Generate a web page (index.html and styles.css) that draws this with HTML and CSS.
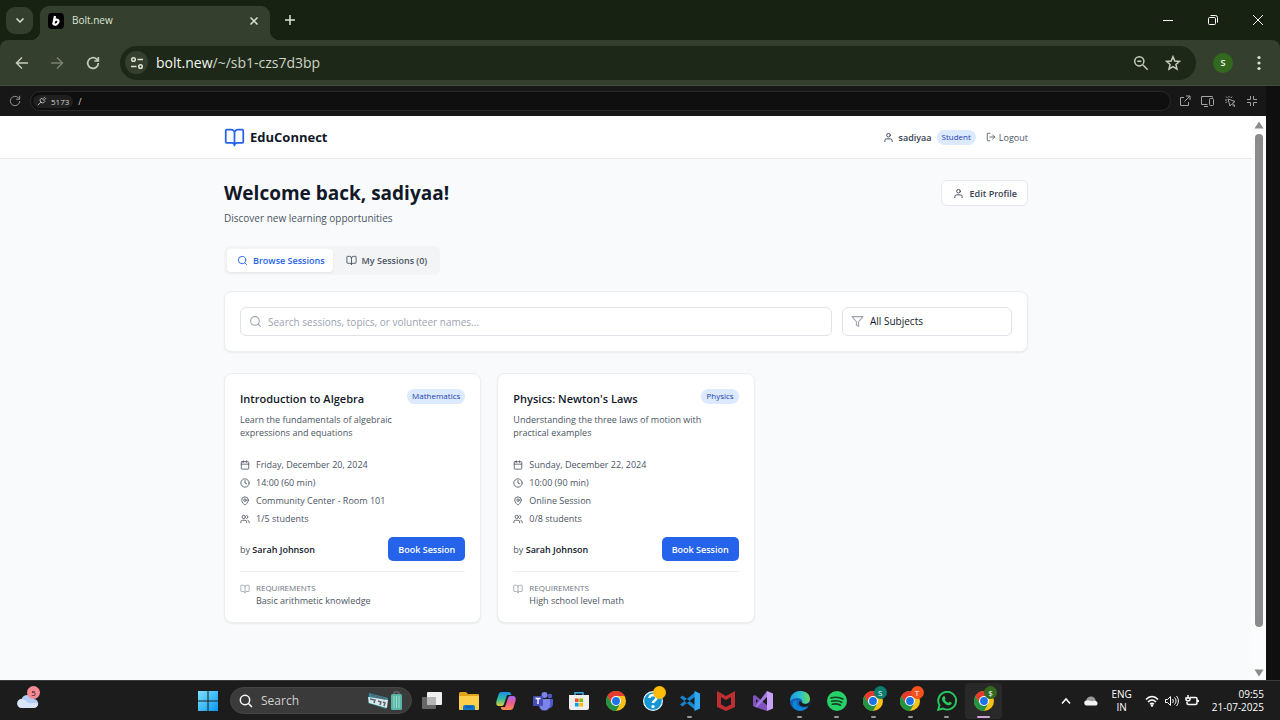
FILE: index.html
```html
<!DOCTYPE html>
<html lang="en">
<head>
<meta charset="utf-8">
<meta name="viewport" content="width=device-width, initial-scale=1">
<title>Bolt.new</title>
<link rel="stylesheet" href="styles.css">
</head>
<body>
<svg class="sprite" aria-hidden="true">
  <symbol id="book" viewBox="0 0 24 24"><path d="M12 7v14M3 18a1 1 0 0 1-1-1V4a1 1 0 0 1 1-1h5a4 4 0 0 1 4 4 4 4 0 0 1 4-4h5a1 1 0 0 1 1 1v13a1 1 0 0 1-1 1h-6a3 3 0 0 0-3 3 3 3 0 0 0-3-3z"/></symbol>
  <symbol id="user" viewBox="0 0 24 24"><path d="M20 21v-2a4 4 0 0 0-4-4H8a4 4 0 0 0-4 4v2"/><circle cx="12" cy="7" r="4"/></symbol>
  <symbol id="logout" viewBox="0 0 24 24"><path d="M9 21H5a2 2 0 0 1-2-2V5a2 2 0 0 1 2-2h4M16 17l5-5-5-5M21 12H9"/></symbol>
  <symbol id="search" viewBox="0 0 24 24"><circle cx="11" cy="11" r="8"/><path d="m21 21-4.3-4.3"/></symbol>
  <symbol id="filter" viewBox="0 0 24 24"><path d="M22 3H2l8 9.46V19l4 2v-8.54z"/></symbol>
  <symbol id="calendar" viewBox="0 0 24 24"><path d="M8 2v4M16 2v4M3 10h18"/><rect x="3" y="4" width="18" height="18" rx="2"/></symbol>
  <symbol id="clock" viewBox="0 0 24 24"><circle cx="12" cy="12" r="10"/><path d="M12 6v6l4 2"/></symbol>
  <symbol id="pin" viewBox="0 0 24 24"><path d="M20 10c0 6-8 12-8 12s-8-6-8-12a8 8 0 0 1 16 0Z"/><circle cx="12" cy="10" r="3"/></symbol>
  <symbol id="users" viewBox="0 0 24 24"><path d="M16 21v-2a4 4 0 0 0-4-4H6a4 4 0 0 0-4 4v2M22 21v-2a4 4 0 0 0-3-3.87M16 3.13a4 4 0 0 1 0 7.75"/><circle cx="9" cy="7" r="4"/></symbol>
  <symbol id="reload" viewBox="0 0 24 24"><path d="M20 12a8 8 0 1 1-2.4-5.7L20 8.5M20 3v6h-6"/></symbol>
  <symbol id="chrome" viewBox="0 0 24 24"><circle cx="12" cy="12" r="12" fill="#fbc116"/><path d="M12 12 6.8 15 1.6 6A12 12 0 0 1 22.4 6H12z" fill="#e33b2e"/><path d="M12 12 17.2 15 12 24A12 12 0 0 1 1.6 6l5.2 9z" fill="#229342"/><circle cx="12" cy="12" r="6" fill="#fff"/><circle cx="12" cy="12" r="4.7" fill="#1a73e8"/></symbol>
</svg>

<header class="browser">
  <div class="tabstrip">
    <button class="tab-menu" aria-label="Search tabs"><svg class="line" width="12" height="12" viewBox="0 0 12 12"><path d="m2.5 4.5 3.5 3.5 3.5-3.5"/></svg></button>
    <div class="tab">
      <svg width="16" height="16" viewBox="0 0 16 16" aria-hidden="true"><rect width="16" height="16" rx="4" fill="#000"/><path fill="none" stroke="#fff" stroke-width="2.3" stroke-linejoin="round" d="M7 3 5.2 11.6M5.7 8.8c.6-2.5 4.6-3 4.8-.7.2 2.8-3.5 4.6-5.1 2.6"/></svg>
      <span class="tab-title">Bolt.new</span>
      <button class="bare" aria-label="Close tab"><svg class="line" width="10" height="10" viewBox="0 0 10 10"><path d="m1.5 1.5 7 7m0-7-7 7"/></svg></button>
    </div>
    <button class="bare new-tab" aria-label="New tab"><svg class="line" width="12" height="12" viewBox="0 0 12 12"><path d="M6 1v10M1 6h10"/></svg></button>
    <div class="window-controls">
      <button class="bare" aria-label="Minimize"><svg class="hair" width="12" height="12" viewBox="0 0 12 12"><path d="M1 6.5h10"/></svg></button>
      <button class="bare" aria-label="Restore"><svg class="hair" width="12" height="12" viewBox="0 0 12 12"><rect x="1.5" y="3.500" width="7" height="7" rx="1"/><path d="M3.500 1.500h5a2 2 0 0 1 2 2v5"/></svg></button>
      <button class="bare" aria-label="Close"><svg class="hair" width="12" height="12" viewBox="0 0 12 12"><path d="m1 1 10 10m0-10L1 11"/></svg></button>
    </div>
  </div>
  <div class="toolbar">
    <nav class="history" aria-label="History">
      <button class="bare" aria-label="Back"><svg class="line" width="14" height="14" viewBox="0 0 14 14"><path d="M13 7H1.500M7 1.500 1.500 7 7 12.500"/></svg></button>
      <button class="bare dim" aria-label="Forward"><svg class="line" width="14" height="14" viewBox="0 0 14 14"><path d="M1 7h11.500M7 1.500 12.500 7 7 12.500"/></svg></button>
      <button class="bare" aria-label="Reload"><svg class="bold" width="16" height="16"><use href="#reload"/></svg></button>
    </nav>
    <div class="omnibox">
      <button class="site-info" aria-label="Site information"><svg class="line" width="14" height="14" viewBox="0 0 14 14"><circle cx="3.500" cy="3.500" r="1.800"/><path d="M7.500 3.500H13M1 10.500h5.500"/><circle cx="10.500" cy="10.500" r="1.800"/></svg></button>
      <span class="url"><b>bolt.new</b>/~/sb1-czs7d3bp</span>
      <button class="bare" aria-label="Zoom"><svg class="line" width="16" height="16" viewBox="0 0 16 16"><circle cx="6.300" cy="6.300" r="4.600"/><path d="m10 10 4.700 4.700M4.300 6.300h4"/></svg></button>
      <button class="bare" aria-label="Bookmark"><svg class="line" width="16" height="16" viewBox="0 0 16 16"><path d="m8 1.700 1.800 4.300 4.700.4-3.600 3.100 1.100 4.600L8 11.600l-4 2.500 1.100-4.600L1.500 6.400l4.700-.4z"/></svg></button>
    </div>
    <button class="avatar" aria-label="Profile">S</button>
    <button class="bare" aria-label="Menu"><svg width="4" height="16" viewBox="0 0 4 16" fill="currentColor"><circle cx="2" cy="2.500" r="1.600"/><circle cx="2" cy="8" r="1.600"/><circle cx="2" cy="13.500" r="1.600"/></svg></button>
  </div>
</header>

<div class="preview">
  <div class="preview-bar">
    <button class="bare" aria-label="Reload preview"><svg class="thin" width="14" height="14"><use href="#reload"/></svg></button>
    <div class="address">
      <span class="port"><svg class="plug" width="10" height="10" viewBox="0 0 12 12"><path d="m1 11 2.500-2.500M7.500 3 9.500 1M9 4.500l2-2M5.500 2.500l4 4-1.500 1.500a3 3 0 0 1-4-4zM3.500 8.500 5 7"/></svg>5173</span>
      <span>/</span>
    </div>
    <button class="bare" aria-label="Open in new tab"><svg class="hair" width="12" height="12" viewBox="0 0 12 12"><path d="M5 2.500H1.500v8h8V7M7 1h4v4M11 1 5.500 6.500"/></svg></button>
    <button class="bare" aria-label="Device size"><svg class="hair" width="13" height="12" viewBox="0 0 13 12"><path d="M11.500 2.500v-1h-11v8h6M3 11.500h4"/><rect x="8.500" y="3.500" width="4" height="7" rx="1"/></svg></button>
    <button class="bare" aria-label="Inspect"><svg class="hair" width="12" height="12" viewBox="0 0 12 12"><path d="m4 4 7 2.500L8.500 8l2.500 3-1 .5L7.500 9 6 11zM1 5h2M5 1v1.500M2 1.500 3.500 3M1.500 8 3 6.500M8 1.500 7 3"/></svg></button>
    <button class="bare" aria-label="Exit full screen"><svg class="hair" width="12" height="12" viewBox="0 0 12 12"><path d="M4.500 1v3.500H1M7.500 1v3.500H11M4.500 11V7.500H1M7.500 11V7.500H11"/></svg></button>
  </div>

  <div class="viewport">
    <div class="app">
      <header class="app-header">
        <div class="container header-row">
          <div class="brand"><svg class="icon brand-icon"><use href="#book"/></svg>EduConnect</div>
          <div class="account">
            <svg class="icon"><use href="#user"/></svg>
            <span class="username">sadiyaa</span>
            <span class="badge">Student</span>
            <button class="logout"><svg class="icon small"><use href="#logout"/></svg>Logout</button>
          </div>
        </div>
      </header>

      <main class="container main">
        <div class="welcome">
          <div>
            <h1>Welcome back, sadiyaa!</h1>
            <p>Discover new learning opportunities</p>
          </div>
          <button class="edit"><svg class="icon"><use href="#user"/></svg>Edit Profile</button>
        </div>

        <div class="switcher" role="tablist">
          <button class="switch active" role="tab" aria-selected="true"><svg class="icon"><use href="#search"/></svg>Browse Sessions</button>
          <button class="switch" role="tab" aria-selected="false"><svg class="icon"><use href="#book"/></svg>My Sessions (0)</button>
        </div>

        <form class="filters">
          <div class="field">
            <svg class="icon field-icon"><use href="#search"/></svg>
            <input class="control" type="text" aria-label="Search sessions" placeholder="Search sessions, topics, or volunteer names...">
          </div>
          <div class="field">
            <svg class="icon field-icon"><use href="#filter"/></svg>
            <select class="control" aria-label="Subject"><option>All Subjects</option><option>Mathematics</option><option>Physics</option></select>
          </div>
        </form>

        <section class="cards">
          <article class="card">
            <div class="card-head">
              <h2>Introduction to Algebra</h2>
              <span class="badge">Mathematics</span>
            </div>
            <p class="summary">Learn the fundamentals of algebraic expressions and equations</p>
            <ul class="details">
              <li><svg class="icon small"><use href="#calendar"/></svg>Friday, December 20, 2024</li>
              <li><svg class="icon small"><use href="#clock"/></svg>14:00 (60 min)</li>
              <li><svg class="icon small"><use href="#pin"/></svg>Community Center - Room 101</li>
              <li><svg class="icon small"><use href="#users"/></svg>1/5 students</li>
            </ul>
            <div class="booking"><span>by <strong>Sarah Johnson</strong></span><button class="book">Book Session</button></div>
            <div class="needs">
              <svg class="icon small"><use href="#book"/></svg>
              <div><h3>REQUIREMENTS</h3><p>Basic arithmetic knowledge</p></div>
            </div>
          </article>
          <article class="card">
            <div class="card-head">
              <h2>Physics: Newton's Laws</h2>
              <span class="badge">Physics</span>
            </div>
            <p class="summary">Understanding the three laws of motion with practical examples</p>
            <ul class="details">
              <li><svg class="icon small"><use href="#calendar"/></svg>Sunday, December 22, 2024</li>
              <li><svg class="icon small"><use href="#clock"/></svg>10:00 (90 min)</li>
              <li><svg class="icon small"><use href="#pin"/></svg>Online Session</li>
              <li><svg class="icon small"><use href="#users"/></svg>0/8 students</li>
            </ul>
            <div class="booking"><span>by <strong>Sarah Johnson</strong></span><button class="book">Book Session</button></div>
            <div class="needs">
              <svg class="icon small"><use href="#book"/></svg>
              <div><h3>REQUIREMENTS</h3><p>High school level math</p></div>
            </div>
          </article>
        </section>
      </main>
    </div>
    <div class="scrollbar" aria-hidden="true">
      <svg width="10" height="8" viewBox="0 0 10 8"><path d="M5 0.500 9.500 7.500h-9z"/></svg>
      <div class="track"><div class="thumb"></div></div>
      <svg width="10" height="8" viewBox="0 0 10 8"><path d="M5 7.500.5.500h9z"/></svg>
    </div>
  </div>
</div>

<footer class="taskbar">
  <div class="weather">
    <div class="app-icon">
      <svg width="22" height="14" viewBox="0 0 22 14" aria-hidden="true"><path d="M5 14a4.500 4.500 0 0 1-.5-9A6.500 6.500 0 0 1 16.500 5 4.500 4.500 0 0 1 17 14z" fill="#b5cdf4"/><path d="M5 14a4.500 4.500 0 0 1-1-8.900C8 5 9 8 12 9c4 1 6-1 9 1a4.500 4.500 0 0 1-4 4z" fill="#d8e5fb"/></svg>
      <span class="count pink">5</span>
    </div>
  </div>
  <button class="start" aria-label="Start"><svg width="20" height="20" viewBox="0 0 20 20"><defs><linearGradient id="win" x1="0" y1="0" x2="1" y2="1"><stop stop-color="#7de3fd"/><stop offset="1" stop-color="#0a95f0"/></linearGradient></defs><path fill="url(#win)" d="M0 0h9.500v9.500H0zM10.500 0H20v9.500h-9.500zM0 10.500h9.500V20H0zM10.500 10.500H20V20h-9.500z"/></svg></button>
  <button class="task-search">
    <svg class="line" width="14" height="14" viewBox="0 0 14 14"><circle cx="6" cy="6" r="4.700"/><path d="m9.500 9.500 3.500 3.500"/></svg>
    <span>Search</span>
    <svg width="36" height="20" viewBox="0 0 36 20" aria-hidden="true"><path d="m2 2 19 5-2 11L1 12z" fill="#2c8c9a"/><path d="m1 6 20 3-1 8L2 12z" fill="#d9e7ea"/><path d="m4 4 14 4M3 8l5 1-1 3M11 10l3 1-1 3M16 11l2 1-1 3" stroke="#5c6472" stroke-width="1.500" fill="none"/><path d="M27 3V1h5v2" fill="none" stroke="#777"/><rect x="24" y="3" width="11" height="16" rx="1.500" fill="#58b4a4"/><path d="M27 5v12M29.500 5v12M32 5v12" stroke="#9cded0"/></svg>
  </button>
  <div class="apps">
    <div class="app-icon"><svg width="20" height="20" viewBox="0 0 20 20"><rect y="6" width="14" height="12" rx="1" fill="#666"/><rect x="5" y="1" width="15" height="13" rx="1" fill="#efefef"/><path d="M5 6h9v8H5z" fill="#b5b5b5"/></svg></div>
    <div class="app-icon"><svg width="22" height="20" viewBox="0 0 22 20"><path d="M1 2.500A1.500 1.500 0 0 1 2.500 1H8l2 2h10a1 1 0 0 1 1 1v4H1z" fill="#e2a21b"/><rect x="1" y="5" width="20" height="14" rx="1" fill="#fcd04b"/><path d="M5 19v-3a2 2 0 0 1 2-2h8a2 2 0 0 1 2 2v3z" fill="#1377cf"/><path d="M7 16h8" stroke="#0b4d97"/></svg></div>
    <div class="app-icon"><svg width="20" height="20" viewBox="0 0 20 20"><defs><linearGradient id="cpa" x1="0" y1="0" x2="0" y2="1"><stop stop-color="#1c8ef0"/><stop offset=".5" stop-color="#31b9a0"/><stop offset="1" stop-color="#e2cf3c"/></linearGradient><linearGradient id="cpb" x1="0" y1="0" x2="0" y2="1"><stop stop-color="#a869ef"/><stop offset=".5" stop-color="#ec5a91"/><stop offset="1" stop-color="#fa8d48"/></linearGradient></defs><path d="M6 1h7c1.500 0 2 1.500 2.400 3H11L8 13c-.4 1.200-1 2-2.500 2H3c-3 0-3-3-2.500-5l2-6.500C3.200 1.800 4 1 6 1z" fill="url(#cpa)"/><path d="M14 19H7c-1.500 0-2-1.500-2.400-3H9l3-9c.4-1.200 1-2 2.500-2H17c3 0 3 3 2.500 5l-2 6.500c-.7 1.700-1.500 2.500-3.500 2.500z" fill="url(#cpb)"/></svg></div>
    <div class="app-icon"><svg width="20" height="20" viewBox="0 0 20 20"><circle cx="17" cy="5" r="2.300" fill="#5059c9"/><circle cx="11.500" cy="4" r="3" fill="#7b83eb"/><path d="M13 8h7v5a4 4 0 0 1-5 4z" fill="#5059c9"/><path d="M6 8h11v6a5.500 5.500 0 0 1-11 0z" fill="#7b83eb"/><rect y="5" width="10" height="10" rx="1" fill="#464eb8"/><path d="M2.500 7.500h5M5 7.500V13" stroke="#fff" stroke-width="1.400"/></svg></div>
    <div class="app-icon"><svg width="20" height="20" viewBox="0 0 20 20"><path d="M6 5V1.700h8V5" fill="none" stroke="#36aef0" stroke-width="1.400"/><path d="M0 4h20v13a2 2 0 0 1-2 2H2a2 2 0 0 1-2-2z" fill="#eee"/><path d="M6 7.500h3.600v3.600H6z" fill="#f25022"/><path d="M10.400 7.500H14v3.600h-3.600z" fill="#7fba00"/><path d="M6 11.900h3.600v3.600H6z" fill="#00a4ef"/><path d="M10.400 11.900H14v3.600h-3.600z" fill="#ffb900"/></svg></div>
    <div class="app-icon"><svg width="20" height="20"><use href="#chrome"/></svg></div>
    <div class="app-icon"><svg width="20" height="20" viewBox="0 0 20 20"><circle cx="10" cy="10" r="9.400" fill="#1496d4" stroke="#e8f5fb" stroke-width="1.200"/><path d="M6.500 7c.2-4 7-4 7 0 0 2.500-3.500 2.500-3.500 5" fill="none" stroke="#fff" stroke-width="2.600"/><circle cx="10" cy="15.500" r="1.600" fill="#fff"/></svg><span class="count gold"></span></div>
    <div class="app-icon running"><svg width="20" height="20" viewBox="0 0 20 20"><path d="M0 6.500 2.500 4.500 16 15v4.500zM0 13.500l2.500 2L16 5V.5z" fill="#1684ce"/><path d="m14.500 0 5.500 2.500v15L14.500 20z" fill="#2fa8ef"/></svg></div>
    <div class="app-icon"><svg width="18" height="20" viewBox="0 0 18 20"><path d="M0 0 9 5l9-5v16l-9 4-9-4zM4 6v7.500l5 2.500 5-2.500V6L9 9z" fill="#bf2f32" fill-rule="evenodd"/></svg></div>
    <div class="app-icon"><svg width="20" height="20" viewBox="0 0 20 20"><path d="M0 5 2 4l13 11-1 5L2 16l-2-1zM3 8v4l2-2z" fill="#8052be" fill-rule="evenodd"/><path d="M2 16 14 0l1 5L4 16z" fill="#a47ae3"/><path d="m14 0 6 2.500v15L14 20z" fill="#c6a1f7"/></svg></div>
    <div class="app-icon running"><svg width="20" height="20" viewBox="0 0 20 20"><defs><linearGradient id="edge"><stop stop-color="#2196e3"/><stop offset=".5" stop-color="#28bfd2"/><stop offset="1" stop-color="#6bdb59"/></linearGradient></defs><circle cx="10" cy="10" r="10" fill="#1263b5"/><path d="M0 10C0-3 20-3 20 8c0 4-5 6-8 4 2-5-6-7-12-2z" fill="url(#edge)"/><path d="M7 10c-2 4 2 8 11 6-6 7-17 3-15-4 .6-2 2-3 4-2z" fill="#0d86d9"/><path d="M12 12c3 2 6 1 8-1l-1.500 4C13 17 9 15 9 12c0-2 3-2 3 0z" fill="#1c1c1c"/></svg></div>
    <div class="app-icon running"><svg width="20" height="20" viewBox="0 0 20 20"><circle cx="10" cy="10" r="10" fill="#25d166"/><path d="M4 7c4-1.200 8.500-.8 12 1M4.700 10.300c3.500-1 7-.7 10 1M5.300 13.300c3-.8 5.500-.5 8.200.9" fill="none" stroke="#173b24" stroke-width="1.600" stroke-linecap="round"/></svg></div>
    <div class="app-icon running"><svg width="20" height="20"><use href="#chrome"/></svg><span class="count teal">S</span></div>
    <div class="app-icon running"><svg width="20" height="20"><use href="#chrome"/></svg><span class="count orange">T</span></div>
    <div class="app-icon running"><svg width="20" height="20" viewBox="0 0 20 20"><path d="m1.200 18.800 1.300-4.600A8.900 8.900 0 1 1 5.900 17.500z" fill="none" stroke="#27c95f" stroke-width="1.900"/><path d="M6.500 5.200c1-.8 1.500.6 2 2 .3.700-.8 1-.6 1.600.7 1.500 1.800 2.300 3.200 3 .6.200 1-1.200 1.600-1 1.400.6 2.500.9 2 1.800-1 2.300-3.500 2-5.700.8-2.500-1.400-5-5-3.500-7.200z" fill="#27c95f"/></svg></div>
    <div class="app-icon running current"><svg width="20" height="20"><use href="#chrome"/></svg><span class="count green">$</span></div>
  </div>
  <div class="tray">
    <svg class="line" width="10" height="10" viewBox="0 0 10 10"><path d="M1 7.500 5 3l4 4.500"/></svg>
    <svg width="14" height="10" viewBox="0 0 14 10"><path d="M3 8a4.500 4.500 0 0 1 8-5.500L12 6z" fill="#999"/><path d="M3 9.500a2.500 2.500 0 0 1-.5-5C5 3.500 7 6 9 5c3-1 5 1 4.500 3-.3 1-1 1.500-2 1.500z" fill="#f2f2f2"/></svg>
    <div class="language">ENG<br>IN</div>
    <div class="status">
      <svg class="line" width="14" height="12" viewBox="0 0 14 12"><path d="M1 4.500c3.500-4 8.500-4 12 0M3 7c2.500-2.700 5.500-2.700 8 0M5 9.200c1.300-1.300 2.700-1.300 4 0"/><circle cx="7" cy="10.500" r=".6"/></svg>
      <svg class="hair" width="14" height="12" viewBox="0 0 14 12"><path d="M.5 4.500v3h2l3 3v-9l-3 3zM7.500 4c1 1 1 3 0 4M9.500 2.500c2 2 2 5 0 7M11.500 1c2.500 3 2.500 7 0 10"/></svg>
      <svg class="line" width="14" height="12" viewBox="0 0 14 12"><path d="M5 2.500h5.500a1.500 1.500 0 0 1 1.500 1.500v4a1.500 1.500 0 0 1-1.500 1.500h-7A1.500 1.500 0 0 1 2 8V7M13.300 5v2M3 0v3M1 3h4v1a2 2 0 0 1-4 0z"/></svg>
    </div>
    <div class="datetime">09:55<br>21-07-2025</div>
  </div>
</footer>
</body>
</html>
```
FILE: styles.css
```css
* { box-sizing: border-box; }

body {
  margin: 0;
  min-height: 100vh;
  display: flex;
  flex-direction: column;
  background: #0f0f0f;
  color: #111827;
  font: 9px/13px "Open Sans", "Noto Sans", sans-serif;
}

button, input, select { font: inherit; color: inherit; margin: 0; }
button { border: 0; padding: 0; background: none; display: flex; align-items: center; justify-content: center; }
h1, h2, h3, p, ul { margin: 0; padding: 0; }
svg { display: block; flex: none; }
.sprite { position: absolute; width: 0; height: 0; }

.line, .hair, .bold, .thin, .plug { fill: none; stroke: currentColor; stroke-width: 1.5; }
.hair, .plug { stroke-width: 1; }
.bold { stroke-width: 2.5; }

/* Browser window */
.browser { background: #182212; color: #dce3d6; }
.tabstrip { display: flex; align-items: center; height: 40px; padding-left: 6px; }
.tab-menu { width: 27px; height: 27px; border-radius: 9px; background: #343f2d; }
.tab {
  position: relative;
  display: flex;
  align-items: center;
  align-self: flex-end;
  gap: 8px;
  width: 230px;
  height: 34px;
  margin: 0 14px 0 7px;
  padding: 0 11px 5px 8px;
  border-radius: 9px 9px 0 0;
  background: #343f2d;
}
.tab::before, .tab::after {
  content: "";
  position: absolute;
  bottom: 0;
  width: 9px;
  height: 9px;
}
.tab::before { right: 100%; background: radial-gradient(circle at 0 0, transparent 9px, #343f2d 9px); }
.tab::after { left: 100%; background: radial-gradient(circle at 100% 0, transparent 9px, #343f2d 9px); }
.tab-title { flex: 1; font-size: 10px; }
.window-controls { display: flex; gap: 33px; margin-left: auto; padding-right: 16px; color: #fff; }

.toolbar {
  display: flex;
  align-items: center;
  height: 46px;
  padding: 0 19px 0 15px;
  border-radius: 8px 8px 0 0;
  border-bottom: 1px solid #414b3b;
  background: #343f2d;
}
.history { display: flex; gap: 21px; margin-right: 19px; color: #c3cdba; }
.dim { color: #788071; }
.omnibox {
  display: flex;
  flex: 1;
  align-items: center;
  height: 34px;
  padding: 0 15px 0 5px;
  gap: 16px;
  border-radius: 17px;
  background: #1e2819;
  color: #c3cdba;
}
.site-info { width: 23px; height: 23px; border-radius: 50%; background: #343f2d; color: #dce3d6; }
.url { flex: 1; margin-left: -8px; font-size: 14px; line-height: 20px; color: #ccd4c6; }
.url b { font-weight: 400; color: #f2f6ee; }
.avatar { width: 20px; height: 20px; margin: 0 24px 0 17px; border-radius: 50%; background: #33691e; color: #fff; font-weight: 600; }

/* Preview pane */
.preview { display: flex; flex: 1; flex-direction: column; margin-right: 14px; }
.preview-bar {
  display: flex;
  align-items: center;
  gap: 10px;
  height: 30px;
  padding: 0 8px;
  background: #171717;
  color: #a3a3a3;
}
.address {
  display: flex;
  flex: 1;
  align-items: center;
  gap: 5px;
  height: 20px;
  margin: 0 -2px;
  padding: 0 2px;
  border: 1px solid #292929;
  border-radius: 10px;
  background: #0f0f0f;
  color: #d4d4d4;
}
.port { display: flex; align-items: center; gap: 4px; padding: 0 4px; border-radius: 7px; background: #202020; font-size: 8px; }
.viewport { display: flex; flex: 1; background: #f9fafb; }
.app { flex: 1; }
.container { max-width: 804px; margin: 0 auto; }

.scrollbar { display: flex; flex-direction: column; align-items: center; width: 14px; padding: 5px 0 3px; background: #fcfcfc; fill: #8b8b8b; }
.track { flex: 1; padding: 5px 0; }
.thumb { width: 8px; height: 93%; border-radius: 4px; background: #8b8b8b; }

.icon { width: 11px; height: 11px; fill: none; stroke: currentColor; stroke-width: 2; stroke-linecap: round; stroke-linejoin: round; }
.small { width: 10px; height: 10px; }
.badge { padding: 1px 5px 2px; border-radius: 8px; background: #dbeafe; color: #1e40af; font-size: 8px; line-height: 12px; font-weight: 500; }

.app-header { background: #fff; border-bottom: 1px solid #e5e7eb; }
.header-row { display: flex; align-items: center; justify-content: space-between; height: 42px; }
.brand { display: flex; align-items: center; gap: 5px; font-size: 13px; line-height: 18px; font-weight: 700; }
.brand-icon { width: 21px; height: 21px; color: #2563eb; }
.account { display: flex; align-items: center; gap: 5px; color: #374151; }
.username { font-weight: 600; }
.logout { gap: 3px; margin-left: 5px; color: #4b5563; }

.main { padding: 21px 0; }
.welcome { display: flex; align-items: flex-start; justify-content: space-between; margin-bottom: 20px; }
h1 { font-size: 19px; line-height: 26px; font-weight: 700; }
.welcome p { margin-top: 4px; font-size: 10px; line-height: 16px; color: #4b5563; }
.edit {
  gap: 6px;
  height: 26px;
  padding: 0 10px 0 11px;
  border: 1px solid #e5e7eb;
  border-radius: 6px;
  background: #fff;
  color: #374151;
  font-weight: 600;
}

.switcher { display: inline-flex; padding: 3px; margin-bottom: 16px; border-radius: 6px; background: #f3f4f6; }
.switch { gap: 5px; height: 23px; padding: 0 10px 0 13px; border-radius: 4px; color: #4b5563; font-weight: 600; }
.active { padding: 0 8px 0 10px; background: #fff; color: #2563eb; box-shadow: 0 1px 2px #0001; }

.filters, .card { border: 1px solid #eceef1; border-radius: 8px; background: #fff; padding: 15px; box-shadow: 0 1px 2px #0001; }
.filters { display: grid; grid-template-columns: 1fr 170px; gap: 10px; margin-bottom: 21px; }
.field { position: relative; }
.field-icon { position: absolute; left: 9px; top: 8px; width: 13px; height: 13px; color: #9ca3af; }
.control {
  display: block;
  width: 100%;
  height: 29px;
  padding: 0 10px 0 27px;
  border: 1px solid #dfe2e6;
  border-radius: 6px;
  background: none;
  appearance: none;
  font-size: 10px;
}
.control::placeholder { color: #9ca3af; opacity: 1; }

.cards { display: grid; grid-template-columns: repeat(3, 1fr); gap: 16px; }
.card-head { display: flex; align-items: flex-start; justify-content: space-between; gap: 10px; }
.summary { max-width: 195px; margin-top: 4px; color: #4b5563; }
h2 { font-size: 11px; line-height: 20px; font-weight: 600; }
.details { display: grid; gap: 5px; margin: 19px 0 12px; list-style: none; color: #4b5563; }
.details li { display: flex; align-items: center; gap: 6px; }
.booking { display: flex; align-items: center; justify-content: space-between; padding-bottom: 10px; border-bottom: 1px solid #f0f1f4; color: #4b5563; }
.booking strong { font-weight: 600; color: #111827; }
.book { height: 24px; padding: 0 10px; border-radius: 5px; background: #2563eb; color: #fff; font-weight: 600; }
.needs { display: flex; gap: 6px; padding-top: 9px; color: #9ca3af; }
.needs .icon { margin-top: 3px; }
.needs h3 { font-size: 8px; line-height: 13px; font-weight: 500; color: #6b7280; }
.needs p { line-height: 13px; color: #4b5563; }

/* Taskbar */
.taskbar { display: flex; align-items: center; height: 40px; border-top: 1px solid #3a3a3a; background: #1c1c1c; color: #fff; }
.weather { width: 190px; padding-left: 10px; }
.weather .app-icon { width: 36px; }
.start { width: 36px; height: 36px; margin-right: 4px; }
.task-search { gap: 8px; width: 182px; height: 27px; margin-right: 2px; padding: 0 8px; border: 1px solid #454545; border-radius: 14px; background: #3a3a3a; }
.task-search span { flex: 1; text-align: left; font-size: 12px; color: #d0d0d0; }
.apps { display: flex; width: 588px; }
.app-icon { position: relative; display: flex; flex: 1; align-items: center; justify-content: center; height: 36px; }
.running::after { content: ""; position: absolute; bottom: 1px; width: 5px; height: 2px; border-radius: 1px; background: #999; }
.current { border-radius: 4px; background: #292929; }
.current::after { width: 13px; background: #d4a3dc; }
.count { position: absolute; top: 3px; right: 5px; width: 13px; height: 13px; border-radius: 50%; font-size: 8px; line-height: 13px; text-align: center; }
.weather .count { right: 6px; }
.pink { background: #f58a95; color: #2a1114; }
.gold { background: #fdbb0a; }
.teal { background: #0b7d70; }
.orange { background: #f4511e; }
.green { background: #33691e; }
.tray { display: flex; align-items: center; margin-left: auto; padding-right: 16px; gap: 13px; font-size: 10px; }
.language { text-align: center; }
.status { display: flex; gap: 6px; }
.datetime { text-align: right; }
```
